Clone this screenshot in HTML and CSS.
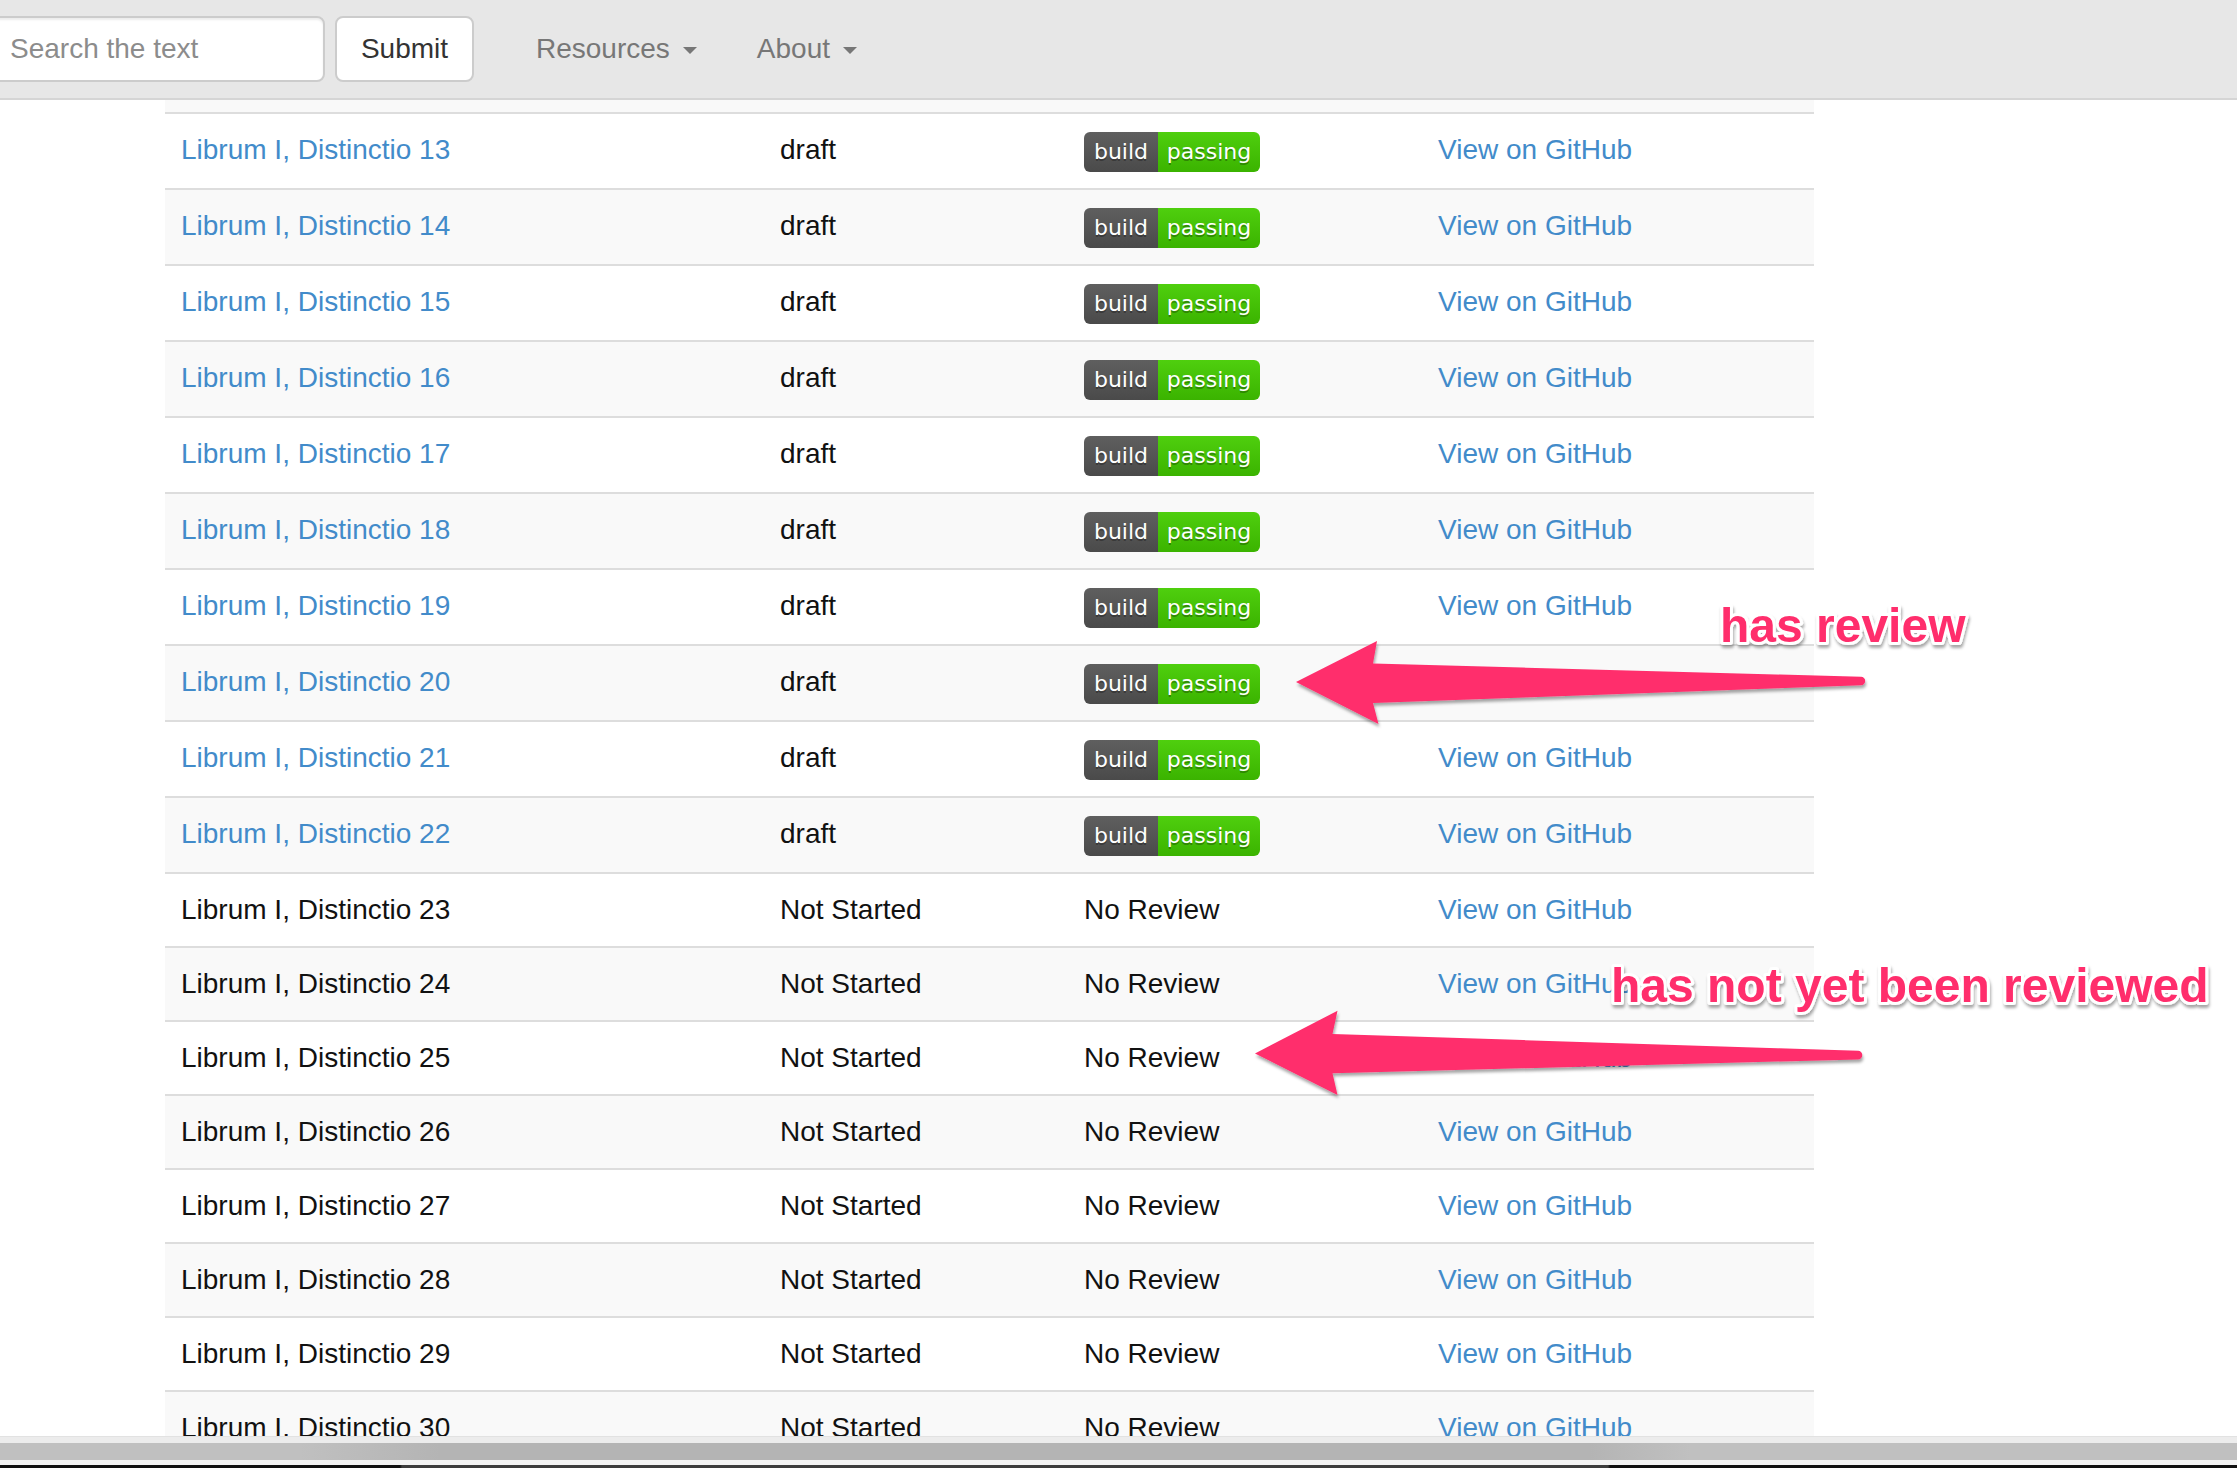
FILE: index.html
```html
<!DOCTYPE html>
<html lang="en">
<head>
<meta charset="utf-8">
<title>Distinctiones</title>
<link rel="stylesheet" href="styles.css">
</head>
<body>
<div class="page">
  <header class="navbar">
    <form class="search">
      <input class="search-input" type="text" placeholder="Search the text">
      <button class="btn" type="button">Submit</button>
    </form>
    <nav class="nav">
      <a class="nav-link" href="#">Resources<span class="caret"></span></a>
      <a class="nav-link" href="#">About<span class="caret"></span></a>
    </nav>
  </header>

  <main class="viewport">
    <table class="table">
      <colgroup>
        <col class="c1"><col class="c2"><col class="c3"><col class="c4">
      </colgroup>
      <tbody>
        <tr class="badge-row"><td><a href="#">Librum I, Distinctio 12</a></td><td>draft</td><td><span class="badge"><span class="b-l">build</span><span class="b-r">passing</span></span></td><td><a href="#">View on GitHub</a></td></tr>
        <tr class="badge-row"><td><a href="#">Librum I, Distinctio 13</a></td><td>draft</td><td><span class="badge"><span class="b-l">build</span><span class="b-r">passing</span></span></td><td><a href="#">View on GitHub</a></td></tr>
        <tr class="badge-row"><td><a href="#">Librum I, Distinctio 14</a></td><td>draft</td><td><span class="badge"><span class="b-l">build</span><span class="b-r">passing</span></span></td><td><a href="#">View on GitHub</a></td></tr>
        <tr class="badge-row"><td><a href="#">Librum I, Distinctio 15</a></td><td>draft</td><td><span class="badge"><span class="b-l">build</span><span class="b-r">passing</span></span></td><td><a href="#">View on GitHub</a></td></tr>
        <tr class="badge-row"><td><a href="#">Librum I, Distinctio 16</a></td><td>draft</td><td><span class="badge"><span class="b-l">build</span><span class="b-r">passing</span></span></td><td><a href="#">View on GitHub</a></td></tr>
        <tr class="badge-row"><td><a href="#">Librum I, Distinctio 17</a></td><td>draft</td><td><span class="badge"><span class="b-l">build</span><span class="b-r">passing</span></span></td><td><a href="#">View on GitHub</a></td></tr>
        <tr class="badge-row"><td><a href="#">Librum I, Distinctio 18</a></td><td>draft</td><td><span class="badge"><span class="b-l">build</span><span class="b-r">passing</span></span></td><td><a href="#">View on GitHub</a></td></tr>
        <tr class="badge-row"><td><a href="#">Librum I, Distinctio 19</a></td><td>draft</td><td><span class="badge"><span class="b-l">build</span><span class="b-r">passing</span></span></td><td><a href="#">View on GitHub</a></td></tr>
        <tr class="badge-row"><td><a href="#">Librum I, Distinctio 20</a></td><td>draft</td><td><span class="badge"><span class="b-l">build</span><span class="b-r">passing</span></span></td><td><a href="#">View on GitHub</a></td></tr>
        <tr class="badge-row"><td><a href="#">Librum I, Distinctio 21</a></td><td>draft</td><td><span class="badge"><span class="b-l">build</span><span class="b-r">passing</span></span></td><td><a href="#">View on GitHub</a></td></tr>
        <tr class="badge-row"><td><a href="#">Librum I, Distinctio 22</a></td><td>draft</td><td><span class="badge"><span class="b-l">build</span><span class="b-r">passing</span></span></td><td><a href="#">View on GitHub</a></td></tr>
        <tr><td>Librum I, Distinctio 23</td><td>Not Started</td><td>No Review</td><td><a href="#">View on GitHub</a></td></tr>
        <tr><td>Librum I, Distinctio 24</td><td>Not Started</td><td>No Review</td><td><a href="#">View on GitHub</a></td></tr>
        <tr><td>Librum I, Distinctio 25</td><td>Not Started</td><td>No Review</td><td><a href="#">View on GitHub</a></td></tr>
        <tr><td>Librum I, Distinctio 26</td><td>Not Started</td><td>No Review</td><td><a href="#">View on GitHub</a></td></tr>
        <tr><td>Librum I, Distinctio 27</td><td>Not Started</td><td>No Review</td><td><a href="#">View on GitHub</a></td></tr>
        <tr><td>Librum I, Distinctio 28</td><td>Not Started</td><td>No Review</td><td><a href="#">View on GitHub</a></td></tr>
        <tr><td>Librum I, Distinctio 29</td><td>Not Started</td><td>No Review</td><td><a href="#">View on GitHub</a></td></tr>
        <tr><td>Librum I, Distinctio 30</td><td>Not Started</td><td>No Review</td><td><a href="#">View on GitHub</a></td></tr>
        <tr><td>Librum I, Distinctio 31</td><td>Not Started</td><td>No Review</td><td><a href="#">View on GitHub</a></td></tr>
      </tbody>
    </table>
  </main>

  <footer class="window-bottom">
    <div class="wb-top"></div>
    <div class="wb-track"></div>
    <div class="wb-gap"></div>
    <div class="wb-edge"></div>
  </footer>

  <svg class="annotations" width="2237" height="1468" viewBox="0 0 2237 1468" aria-hidden="true">
    <defs>
      <filter id="shadow" x="-10%" y="-30%" width="120%" height="160%">
        <feDropShadow dx="1" dy="3" stdDeviation="1.6" flood-color="#000" flood-opacity="0.35"/>
      </filter>
    </defs>
    <g class="arrow" filter="url(#shadow)">
      <path d="M1296 682 L1377 641 L1373 663.5 L1861 676.8 A4.2 4.2 0 0 1 1861 685.2 L1373 703 L1378.5 724 Z"/>
    </g>
    <g class="arrow" filter="url(#shadow)">
      <path d="M1255 1053.5 L1337.5 1010.7 L1332.5 1034 L1858 1050.8 A4.3 4.3 0 0 1 1858 1059.4 L1332.5 1073.3 L1337.5 1095 Z"/>
    </g>
    <g filter="url(#shadow)">
      <text class="note" x="1720" y="642">has review</text>
      <text class="note" x="1611" y="1002">has not yet been reviewed</text>
    </g>
  </svg>
</div>
</body>
</html>
```

FILE: styles.css
```css
* { box-sizing: border-box; }

html, body {
  margin: 0;
  padding: 0;
  background: #fff;
}

body {
  font-family: "Liberation Sans", Arial, Helvetica, sans-serif;
  font-size: 28px;
  color: #111;
  overflow: hidden;
}

.page {
  position: relative;
  width: 2237px;
  height: 1468px;
  overflow: hidden;
  display: flex;
  flex-direction: column;
}

/* ---------- navbar ---------- */
.navbar {
  flex: 0 0 100px;
  height: 100px;
  display: flex;
  align-items: center;
  background: #e7e7e7;
  border-bottom: 2px solid #d5d5d5;
  position: relative;
  z-index: 2;
}

.search {
  display: flex;
  align-items: center;
  gap: 10px;
  margin: 0 0 0 -16px;
}

.search-input {
  width: 341px;
  height: 66px;
  padding: 0 24px;
  font-family: inherit;
  font-size: 28px;
  color: #555;
  background: #fff;
  border: 2px solid #ccc;
  border-radius: 8px;
  box-shadow: inset 0 2px 2px rgba(0,0,0,0.075);
  outline: none;
}

.search-input::placeholder { color: #8c8c8c; }

.btn {
  width: 139px;
  height: 66px;
  padding: 0;
  font-family: inherit;
  font-size: 28px;
  color: #333;
  background: #fff;
  border: 2px solid #ccc;
  border-radius: 8px;
}

.nav {
  display: flex;
  margin-left: 32px;
}

.nav-link {
  display: flex;
  align-items: center;
  padding: 0 30px;
  color: #777;
  text-decoration: none;
  line-height: 40px;
}

.caret {
  display: inline-block;
  width: 0;
  height: 0;
  margin-left: 13px;
  margin-top: 2px;
  border-top: 7px solid #777;
  border-left: 7px solid transparent;
  border-right: 7px solid transparent;
}

/* ---------- table ---------- */
.viewport {
  flex: 0 0 1336px;
  height: 1336px;
  overflow: hidden;
}

.table {
  margin: -64px 0 0 165px;
  width: 1649px;
  border-collapse: collapse;
  border-spacing: 0;
  table-layout: fixed;
}

.c1 { width: 599px; }
.c2 { width: 304px; }
.c3 { width: 354px; }
.c4 { width: 392px; }

.table td {
  height: 74px;
  padding: 16px;
  line-height: 40px;
  border-top: 2px solid #ddd;
  vertical-align: top;
  white-space: nowrap;
  color: #111;
}

.table .badge-row td {
  height: 76px;
  padding-top: 16px;
  padding-bottom: 16px;
}

.table tbody tr:nth-child(odd) td { background: #f9f9f9; }

.table a {
  color: #428bca;
  text-decoration: none;
}

/* ---------- build badge ---------- */
.badge {
  display: flex;
  width: 176px;
  height: 40px;
  margin-top: 2px;
  border-radius: 6px;
  overflow: hidden;
  font-family: "DejaVu Sans", Verdana, sans-serif;
  font-size: 22px;
  line-height: 40px;
  color: #fff;
  text-shadow: 0 2px 0 rgba(1,1,1,0.3);
}

.b-l {
  width: 74px;
  text-align: center;
  background: linear-gradient(#5f5f5f, #4a4a4a);
}

.b-r {
  width: 102px;
  text-align: center;
  background: linear-gradient(#4fcf0e, #3bb300);
}

/* ---------- window bottom chrome ---------- */
.window-bottom {
  flex: 0 0 32px;
  display: flex;
  flex-direction: column;
  position: relative;
  z-index: 2;
}

.wb-top {
  height: 7px;
  background: #ececec;
  border-top: 1px solid #e2e2e2;
}

.wb-track {
  height: 17px;
  background: linear-gradient(to right, #c0c0c0 0, #c0c0c0 300px, #b4b4b4 440px, #b4b4b4 1590px, #c0c0c0 1690px, #c0c0c0 100%);
}

.wb-gap {
  height: 5px;
  background: #f3f3f3;
}

.wb-edge {
  height: 3px;
  background: linear-gradient(to right, #111 0, #111 400px, #3d3d3d 402px, #3d3d3d 1608px, #111 1610px, #111 100%);
}

/* ---------- annotations overlay ---------- */
.annotations {
  position: absolute;
  top: 0;
  left: 0;
  z-index: 3;
  pointer-events: none;
}

.arrow path {
  fill: #ff2d6c;
}

.note {
  font-family: "Liberation Sans", Arial, Helvetica, sans-serif;
  font-weight: 700;
  font-size: 48px;
  fill: #ff2d6c;
  stroke: #fff;
  stroke-width: 6px;
  stroke-linejoin: round;
  paint-order: stroke fill;
}
```
